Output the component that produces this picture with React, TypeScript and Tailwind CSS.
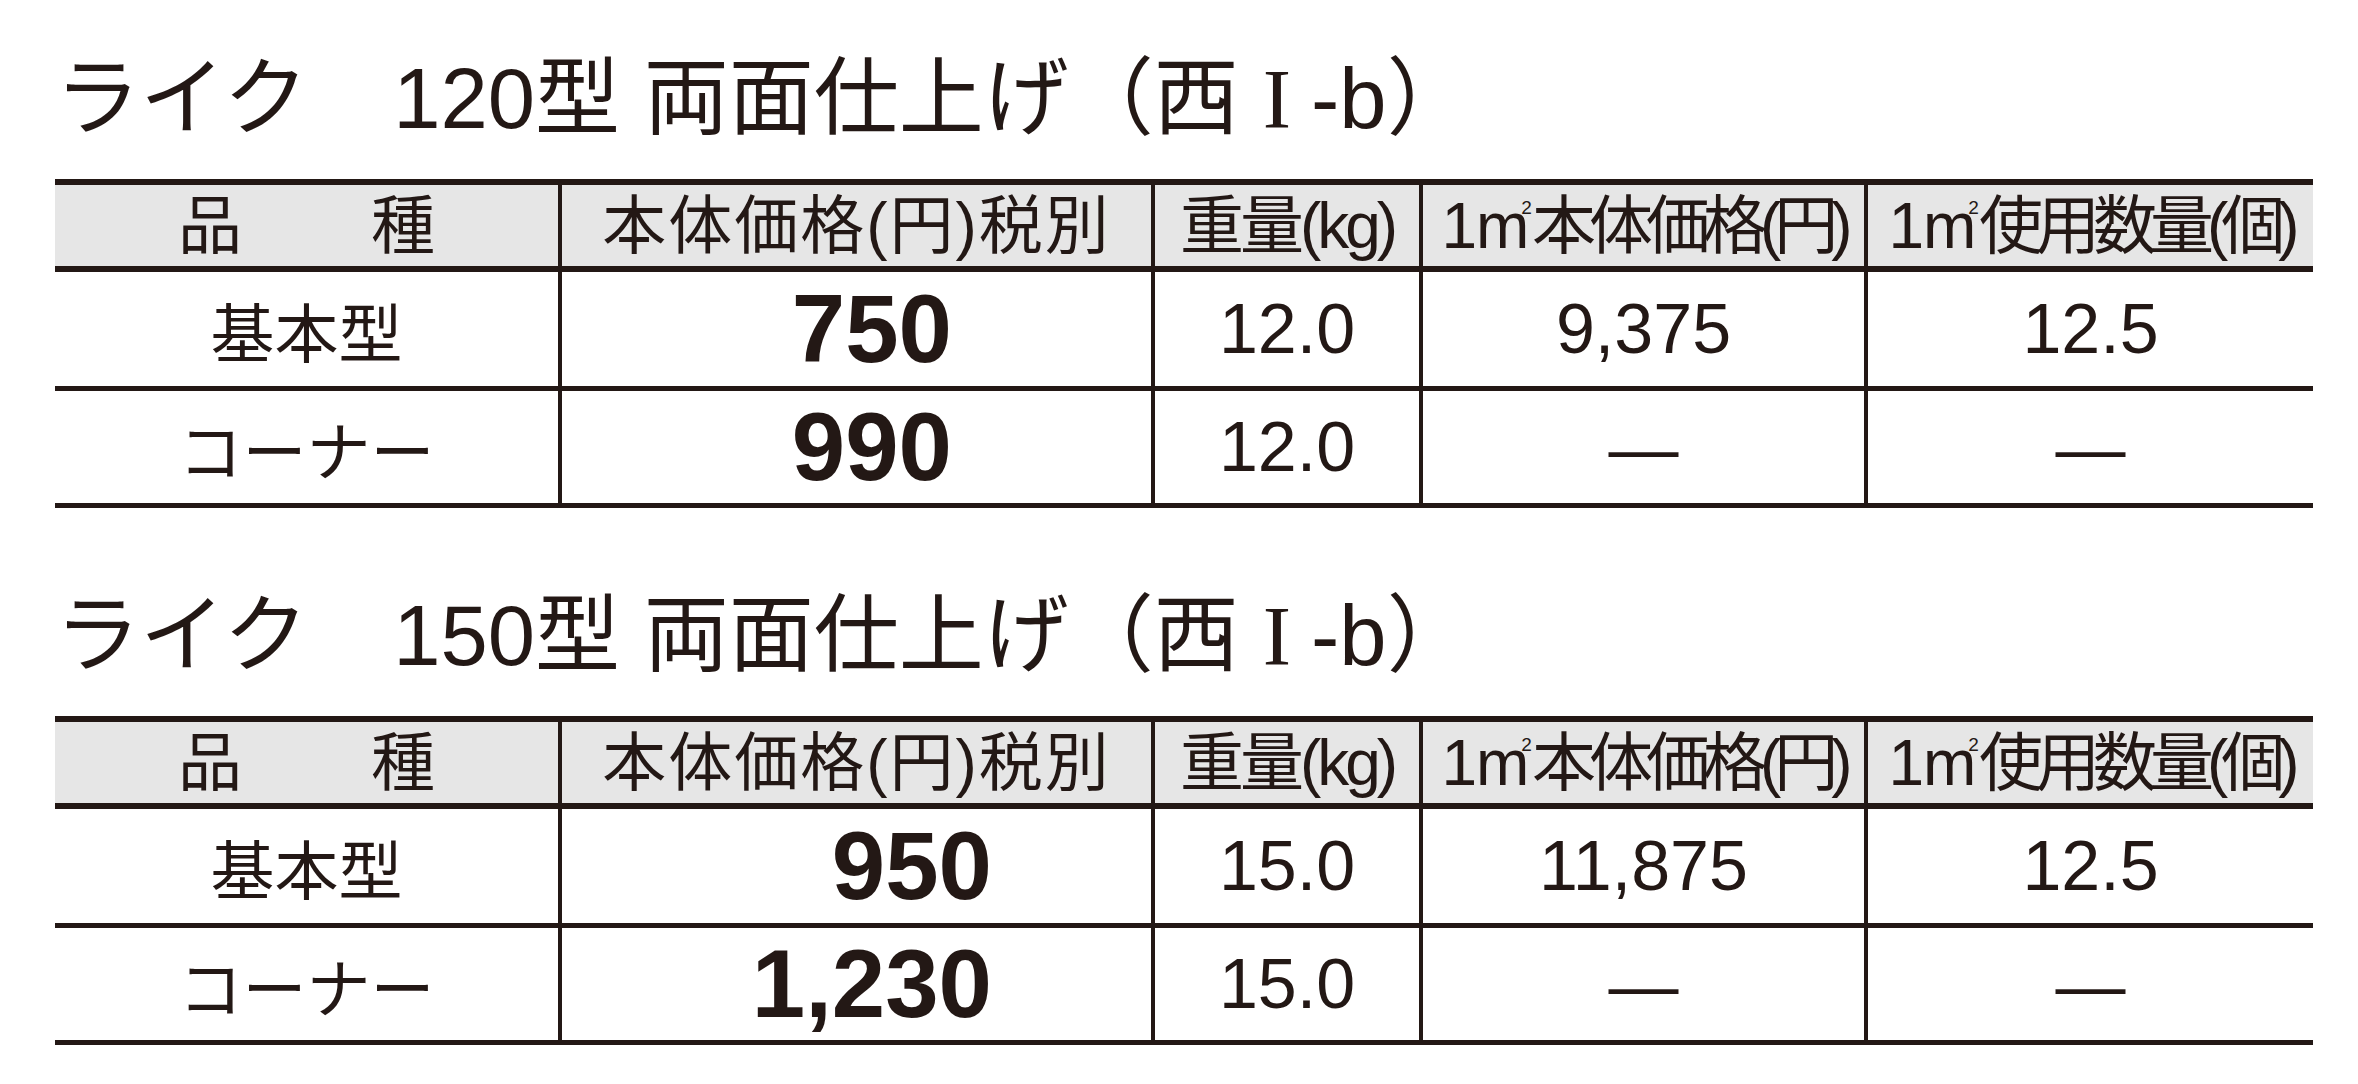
const cols = "grid grid-cols-[503px_593px_268px_445px_449px]";

type Row = {
  name: string;
  price: string;
  weight: string;
  perM2: string;
  count: string;
};

const tables: { title: string; pricePad: string; rows: Row[] }[] = [
  {
    title: "120型",
    pricePad: "pr-[199px]",
    rows: [
      { name: "基本型", price: "750", weight: "12.0", perM2: "9,375", count: "12.5" },
      { name: "コーナー", price: "990", weight: "12.0", perM2: "—", count: "—" },
    ],
  },
  {
    title: "150型",
    pricePad: "pr-[159px]",
    rows: [
      { name: "基本型", price: "950", weight: "15.0", perM2: "11,875", count: "12.5" },
      { name: "コーナー", price: "1,230", weight: "15.0", perM2: "—", count: "—" },
    ],
  },
];

// 1㎡ の表記（小さい2を右上に）
function M2() {
  return (
    <>
      1<span className="ml-[6px]">m</span>
      <span className="relative -top-[34px] text-[19px] ml-[-1px] mr-[0px] tracking-normal">2</span>
    </>
  );
}

function Cell({ children, className = "" }: { children: React.ReactNode; className?: string }) {
  return (
    <div className={`flex items-center justify-center border-l-[4px] border-[#231815] ${className}`}>
      <span className="whitespace-nowrap">{children}</span>
    </div>
  );
}

function Value({ v }: { v: string }) {
  if (v === "—") {
    return <span className="inline-block font-['Liberation_Sans',sans-serif] text-[70px] leading-none translate-y-[2px]">—</span>;
  }
  return <span className="font-['Liberation_Sans',sans-serif] text-[70px] leading-none">{v}</span>;
}

function PriceTable({ title, pricePad, rows }: { title: string; pricePad: string; rows: Row[] }) {
  return (
    <section>
      <h2 className="h-[85px] text-[85px] leading-[85px] whitespace-pre font-['Liberation_Sans','Noto_Sans_CJK_JP',sans-serif] mb-[38px]">
        {`ライク　${title} 両面仕上げ（西`}
        <span className="font-['Liberation_Serif',serif] ml-[24px] mr-[20px]">I</span>
        {"-b）"}
      </h2>
      <div className="w-[2258px] border-t-[6px] border-[#231815]">
        {/* 見出し */}
        <div className={`${cols} h-[87px] bg-[#e6e6e6] border-b-[6px] border-[#231815] text-[64px] leading-none font-['Liberation_Sans','Noto_Sans_CJK_JP',sans-serif]`}>
          <div className="flex items-center justify-center gap-[129px]">
            <span>品</span>
            <span>種</span>
          </div>
          <Cell className="tracking-[2px]">本体価格(円)税別</Cell>
          <Cell className="tracking-[-4px]">重量(kg)</Cell>
          <Cell className="tracking-[-7px]">
            <M2 />本体価格(円)
          </Cell>
          <Cell className="tracking-[-7px]">
            <M2 />使用数量(個)
          </Cell>
        </div>
        {rows.map((r, i) => (
          <div
            key={r.name}
            className={`${cols} ${i === 0 ? "h-[119px]" : "h-[117px]"} border-b-[5px] border-[#231815]`}
          >
            <div className="flex items-center justify-center text-[64px] leading-none font-['Noto_Sans_CJK_JP',sans-serif]">
              {r.name}
            </div>
            <Cell className={`!justify-end ${pricePad}`}>
              <span className="font-['Liberation_Sans',sans-serif] font-bold text-[96px] leading-none">
                {r.price}
              </span>
            </Cell>
            <Cell>
              <Value v={r.weight} />
            </Cell>
            <Cell>
              <Value v={r.perM2} />
            </Cell>
            <Cell>
              <Value v={r.count} />
            </Cell>
          </div>
        ))}
      </div>
    </section>
  );
}

export default function App() {
  return (
    <div className="w-[2358px] h-[1084px] bg-white text-[#231815] pl-[55px] pt-[56px] flex flex-col gap-[85px] overflow-hidden">
      {tables.map((t) => (
        <PriceTable key={t.title} {...t} />
      ))}
    </div>
  );
}
